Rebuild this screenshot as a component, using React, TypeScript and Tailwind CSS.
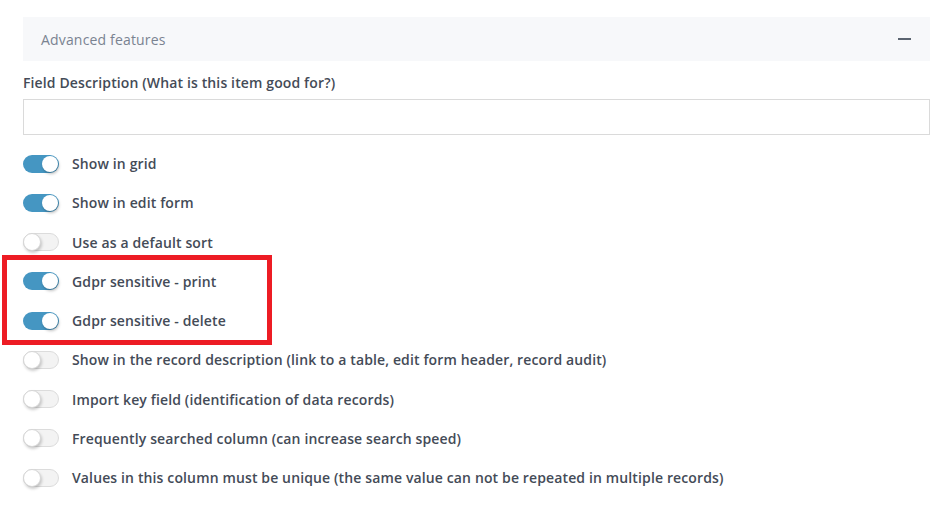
import React from 'react';

const rows: { label: string; on: boolean }[] = [
  { label: 'Show in grid', on: true },
  { label: 'Show in edit form', on: true },
  { label: 'Use as a default sort', on: false },
  { label: 'Gdpr sensitive - print', on: true },
  { label: 'Gdpr sensitive - delete', on: true },
  { label: 'Show in the record description (link to a table, edit form header, record audit)', on: false },
  { label: 'Import key field (identification of data records)', on: false },
  { label: 'Frequently searched column (can increase search speed)', on: false },
  { label: 'Values in this column must be unique (the same value can not be repeated in multiple records)', on: false },
];

const Toggle: React.FC<{ on: boolean }> = ({ on }) => (
  <span
    className={
      on
        ? 'relative inline-block w-[36px] h-[18px] rounded-full bg-[#4596c2] shrink-0'
        : 'relative inline-block w-[36px] h-[18px] rounded-full bg-[#f3f3f3] border border-[#dcdcdc] shrink-0'
    }
  >
    <span
      className={
        on
          ? 'absolute top-[1px] right-[1px] w-[16px] h-[16px] rounded-full bg-white shadow-[1px_2px_3px_rgba(0,0,0,0.25)]'
          : 'absolute top-[-1px] left-[-1px] w-[18px] h-[18px] rounded-full bg-white border border-[#d6d6d6] shadow-[1px_2px_3px_rgba(0,0,0,0.2)]'
      }
    />
  </span>
);

export default function App() {
  return (
    <div className="relative w-[951px] h-[522px] bg-white pl-[23px] pr-[21px] pt-[17px] font-['Open_Sans',sans-serif]">
      <div className="flex items-center justify-between h-[44px] bg-[#f7f8fa] pl-[18px] pr-[19px]">
        <span className="text-[14px] tracking-[0.17px] text-[#7a8391]">Advanced features</span>
        <span className="block w-[13px] h-[2px] bg-[#5b6470]" />
      </div>

      <div className="mt-[12px] text-[14px] leading-[20px] font-semibold tracking-[0.13px] text-[#444b57]">
        Field Description (What is this item good for?)
      </div>
      <div className="mt-[6px] h-[36px] border border-[#dadada] bg-white" />

      <div className="mt-[9px] flex flex-col">
        {rows.map((r) => (
          <div key={r.label} className="flex items-center h-[39.25px] gap-[13px]">
            <Toggle on={r.on} />
            <span className="text-[14px] font-semibold tracking-[0.13px] text-[#444b57] whitespace-nowrap">{r.label}</span>
          </div>
        ))}
      </div>

      <div className="absolute left-[2px] top-[255px] w-[270px] h-[90px] border-[5px] border-[#ed1c24] pointer-events-none" />
    </div>
  );
}
